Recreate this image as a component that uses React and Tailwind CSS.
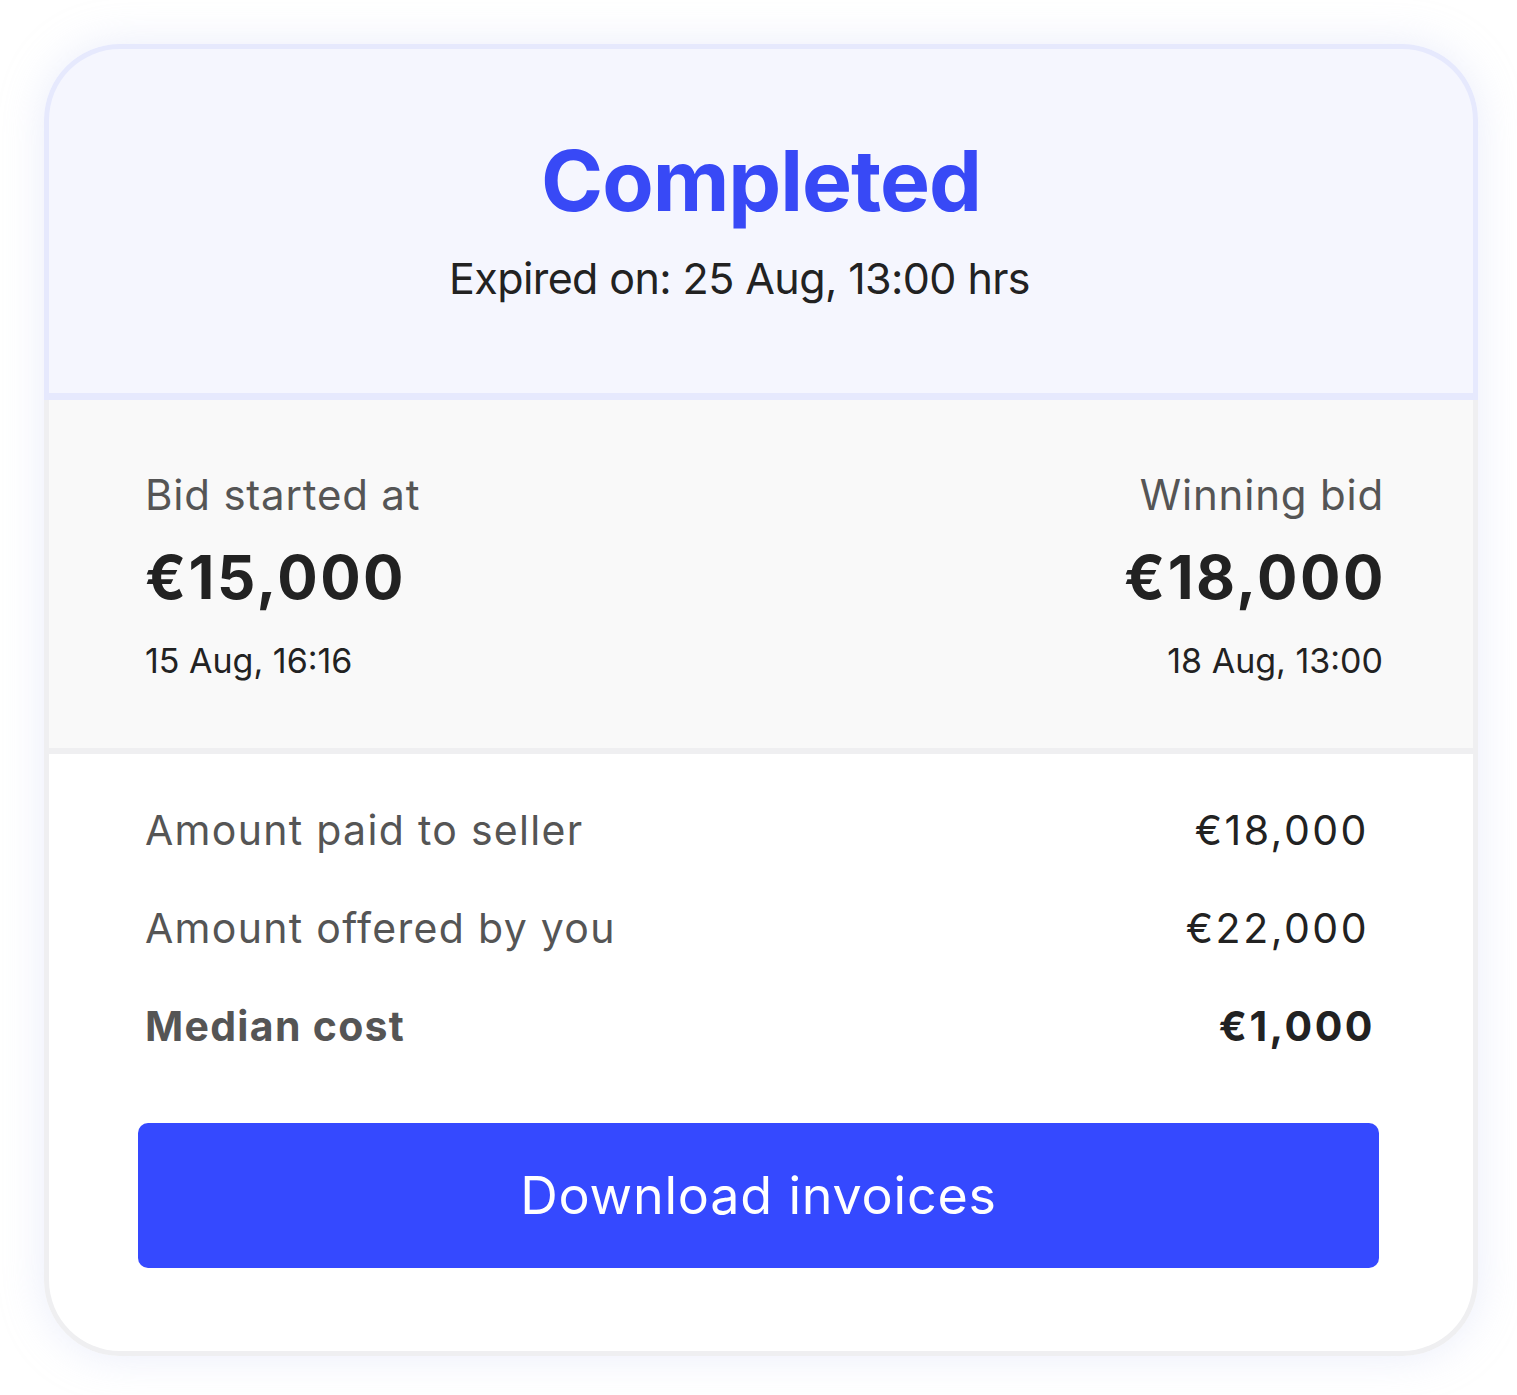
import React from 'react';

const rows = [
  { label: 'Amount paid to seller', value: '€18,000' },
  { label: 'Amount offered by you', value: '€22,000' },
  { label: 'Median cost', value: '€1,000', strong: true },
];

export default function App() {
  return (
    <div
      className="min-h-[1395px] bg-white pt-[44px] pl-[44px]"
      style={{ fontFamily: 'Inter, "Noto Sans", sans-serif' }}
    >
      <div className="w-[1434px] rounded-[76px] bg-white shadow-[0_0_44px_rgba(196,202,240,0.35)]">
        {/* status header */}
        <div className="rounded-t-[76px] border-[5px] border-b-[7px] border-[#e6e9fd] bg-[#f5f6fe] pt-[90px] pb-[93px]">
          <h1 className="text-center text-[84px] leading-none font-bold tracking-[-1px] text-[#3849f6]">
            Completed
          </h1>
          <p className="mt-[34px] pr-[43px] text-center text-[43px] leading-none tracking-[-0.6px] text-[#222222]">
            Expired on: 25 Aug, 13:00 hrs
          </p>
        </div>

        {/* bids */}
        <div className="flex justify-between border-x-[5px] border-b-[6px] border-[#efeff1] bg-[#f9f9f9] pt-[74px] pb-[70px] pl-[96px] pr-[90px]">
          <div className="flex flex-col items-start">
            <span className="text-[42px] leading-none tracking-[0.8px] text-[#555555]">Bid started at</span>
            <span className="mt-[31px] text-[60px] leading-none font-bold tracking-[2.5px] text-[#222222]">€15,000</span>
            <span className="mt-[37px] text-[34px] leading-none text-[#222222]">15 Aug, 16:16</span>
          </div>
          <div className="flex flex-col items-end">
            <span className="-mr-[1px] text-[42px] leading-none tracking-[0.8px] text-[#555555]">Winning bid</span>
            <span className="mt-[31px] -mr-[3px] text-[60px] leading-none font-bold tracking-[2.5px] text-[#222222]">€18,000</span>
            <span className="mt-[37px] text-[34px] leading-none text-[#222222]">18 Aug, 13:00</span>
          </div>
        </div>

        {/* summary */}
        <div className="rounded-b-[76px] border-x-[5px] border-b-[5px] border-[#efeff1] bg-white pt-[56px] pb-[83px]">
          <div className="flex flex-col gap-[57px] pl-[96px] pr-[104px]">
            {rows.map((r) => (
              <div key={r.label} className="flex items-center justify-between">
                <span className={`text-[41px] leading-none tracking-[1.3px] text-[#555555] ${r.strong ? 'font-bold' : ''}`}>
                  {r.label}
                </span>
                <span className={`text-[41px] leading-none tracking-[2.5px] text-[#222222] ${r.strong ? '-mr-[6px] font-bold' : ''}`}>
                  {r.value}
                </span>
              </div>
            ))}
          </div>
          <button className="mt-[76px] ml-[89px] flex h-[145px] w-[1241px] items-center justify-center rounded-[10px] bg-[#3549ff] text-[52px] leading-none tracking-[0.8px] text-white">
            Download invoices
          </button>
        </div>
      </div>
    </div>
  );
}
